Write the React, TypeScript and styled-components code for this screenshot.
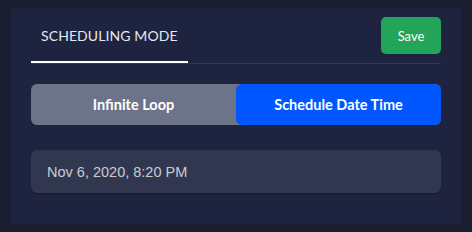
import styled, { createGlobalStyle } from 'styled-components'
import { useState } from 'react'

const GlobalStyle = createGlobalStyle`
    html, body {
        margin: 0;
        padding: 0;
        background-color: #191e31;
        font-family: Lato, "Liberation Sans", sans-serif;
    }
`;

const Page = styled.div`
    width: 472px;
    height: 232px;
    padding: 8px 0 0 11px;
    box-sizing: border-box;
`;

const Card = styled.div`
    width: 450px;
    height: 216px;
    box-sizing: border-box;
    background-color: #1e2440;
    border-radius: 4px;
    padding: 9px 20px 0 20px;
    display: flex;
    flex-direction: column;
`;

const Header = styled.div`
    display: flex;
    justify-content: space-between;
    align-items: flex-end;
    border-bottom: 1px solid #343a56;
`;

const Tab = styled.div<{ $active?: boolean }>`
    padding: 0 10px 7px 10px;
    height: 46px;
    display: flex;
    align-items: center;
    box-sizing: border-box;
    color: #e6e8ef;
    font-size: 14px;
    letter-spacing: 0.1px;
    border-bottom: 2px solid ${(props) => (props.$active ? '#ffffff' : 'transparent')};
`;

const SaveButton = styled.button`
    align-self: flex-start;
    width: 60px;
    height: 37px;
    border: none;
    border-radius: 5px;
    background-color: #22a559;
    color: #ffffff;
    font-family: Lato, "Liberation Sans", sans-serif;
    font-size: 13px;
    cursor: pointer;
`;

const Toggle = styled.div`
    margin-top: 20px;
    height: 41px;
    display: flex;
    border-radius: 6px;
    background-color: #6d7389;
    overflow: hidden;
`;

const ToggleOption = styled.button<{ $selected: boolean }>`
    flex: 1 1 0;
    border: none;
    border-radius: 6px;
    background-color: ${(props) => (props.$selected ? '#0057ff' : 'transparent')};
    color: #ffffff;
    font-family: Lato, "Liberation Sans", sans-serif;
    font-weight: 700;
    font-size: 14.5px;
    cursor: pointer;
    &:first-child {
        flex-basis: 8px;
    }
`;

const DateField = styled.div`
    margin-top: 25px;
    height: 43px;
    display: flex;
    align-items: center;
    padding: 0 16px;
    border-radius: 6px;
    background-color: #31374f;
    box-shadow: 0 1px 1px rgba(0, 0, 0, 0.25);
    color: #c9ccd8;
    font-family: "Liberation Sans", sans-serif;
    font-size: 14.5px;
`;

const App = () => {
    const [mode, setMode] = useState<'loop' | 'schedule'>('schedule');

    return (
        <Page>
            <GlobalStyle />
            <Card>
                <Header>
                    <Tab $active>SCHEDULING MODE</Tab>
                    <SaveButton>Save</SaveButton>
                </Header>
                <Toggle>
                    <ToggleOption $selected={mode === 'loop'} onClick={() => setMode('loop')}>
                        Infinite Loop
                    </ToggleOption>
                    <ToggleOption $selected={mode === 'schedule'} onClick={() => setMode('schedule')}>
                        Schedule Date Time
                    </ToggleOption>
                </Toggle>
                <DateField>Nov 6, 2020, 8:20 PM</DateField>
            </Card>
        </Page>
    );
};

export default App;
